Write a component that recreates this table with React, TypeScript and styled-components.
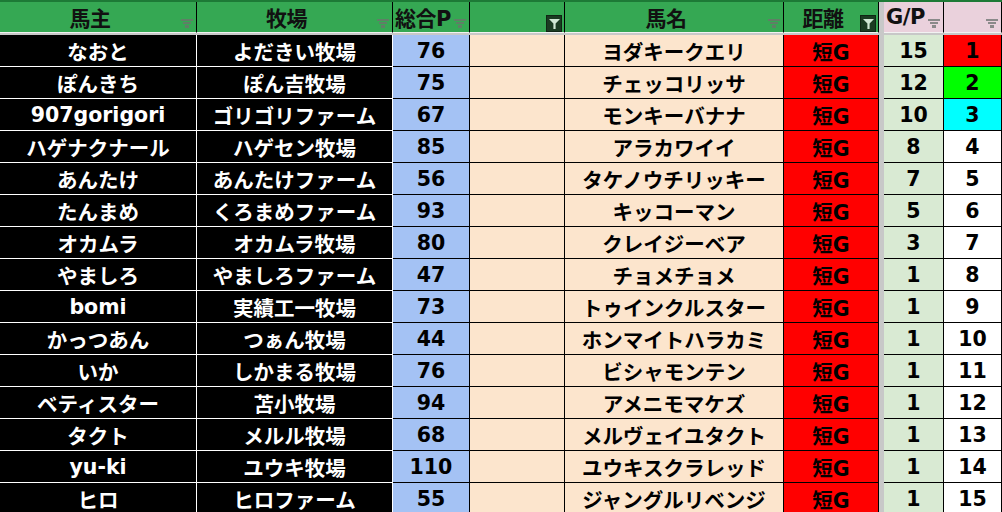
import React from 'react';
import styled, { createGlobalStyle } from 'styled-components';

const GlobalStyle = createGlobalStyle`
  html, body {
    margin: 0;
    padding: 0;
    background: #fff;
    overflow: hidden;
  }
  * {
    box-sizing: border-box;
  }
`;

const COLUMNS = '197px 196px 77px 95px 219px 95px 5px 60px 58px';

type Entry = {
  owner: string;
  farm: string;
  points: number;
  horse: string;
  gp: number;
  rank: number;
};

const entries: Entry[] = [
  { owner: 'なおと', farm: 'よだきい牧場', points: 76, horse: 'ヨダキークエリ', gp: 15, rank: 1 },
  { owner: 'ぽんきち', farm: 'ぽん吉牧場', points: 75, horse: 'チェッコリッサ', gp: 12, rank: 2 },
  { owner: '907gorigori', farm: 'ゴリゴリファーム', points: 67, horse: 'モンキーバナナ', gp: 10, rank: 3 },
  { owner: 'ハゲナクナール', farm: 'ハゲセン牧場', points: 85, horse: 'アラカワイイ', gp: 8, rank: 4 },
  { owner: 'あんたけ', farm: 'あんたけファーム', points: 56, horse: 'タケノウチリッキー', gp: 7, rank: 5 },
  { owner: 'たんまめ', farm: 'くろまめファーム', points: 93, horse: 'キッコーマン', gp: 5, rank: 6 },
  { owner: 'オカムラ', farm: 'オカムラ牧場', points: 80, horse: 'クレイジーベア', gp: 3, rank: 7 },
  { owner: 'やましろ', farm: 'やましろファーム', points: 47, horse: 'チョメチョメ', gp: 1, rank: 8 },
  { owner: 'bomi', farm: '実績工一牧場', points: 73, horse: 'トゥインクルスター', gp: 1, rank: 9 },
  { owner: 'かっつあん', farm: 'つぁん牧場', points: 44, horse: 'ホンマイトハラカミ', gp: 1, rank: 10 },
  { owner: 'いか', farm: 'しかまる牧場', points: 76, horse: 'ビシャモンテン', gp: 1, rank: 11 },
  { owner: 'ベティスター', farm: '苫小牧場', points: 94, horse: 'アメニモマケズ', gp: 1, rank: 12 },
  { owner: 'タクト', farm: 'メルル牧場', points: 68, horse: 'メルヴェイユタクト', gp: 1, rank: 13 },
  { owner: 'yu-ki', farm: 'ユウキ牧場', points: 110, horse: 'ユウキスクラレッド', gp: 1, rank: 14 },
  { owner: 'ヒロ', farm: 'ヒロファーム', points: 55, horse: 'ジャングルリベンジ', gp: 1, rank: 15 },
];

const rankColors: Record<number, string> = {
  1: '#ff0000',
  2: '#00ff00',
  3: '#00ffff',
};

const Sheet = styled.div`
  width: 1002px;
  height: 512px;
  overflow: hidden;
  font-family: 'DejaVu Sans', 'Noto Sans CJK JP', sans-serif;
  font-weight: bold;
  background: #fff;
`;

const HeaderRow = styled.div`
  display: grid;
  grid-template-columns: ${COLUMNS};
  height: 31px;
  border-top: 2px solid #1d7a36;
`;

const HeaderCell = styled.div<{ $pink?: boolean }>`
  position: relative;
  display: flex;
  align-items: center;
  justify-content: center;
  padding-right: 16px;
  background: ${(p) => (p.$pink ? '#ead1dc' : '#35a853')};
  border-right: 1px solid #000;
  border-bottom: 1px solid #f2f2f2;
  color: #111;
  font-size: 21px;
  white-space: nowrap;
  letter-spacing: -0.5px;
`;

const GapCell = styled.div`
  background: #c8c8c8;
`;

const FilterMark = styled.svg`
  position: absolute;
  right: 3px;
  bottom: 4px;
`;

const ActiveFilter = styled.div`
  position: absolute;
  right: 2px;
  bottom: 0;
  width: 16px;
  height: 17px;
  background: #1b3b22;
  border: 1px solid #0f2614;
  display: flex;
  align-items: center;
  justify-content: center;
`;

const Divider = styled.div`
  height: 4px;
  background: #c8c8c8;
`;

const Row = styled.div`
  display: grid;
  grid-template-columns: ${COLUMNS};
  height: 32px;
`;

const Cell = styled.div<{ $bg: string; $dark?: boolean }>`
  display: flex;
  align-items: center;
  justify-content: center;
  padding-top: 1px;
  background: ${(p) => p.$bg};
  color: ${(p) => (p.$dark ? '#fff' : '#000')};
  border-right: 1px solid ${(p) => (p.$dark ? '#fff' : '#000')};
  border-bottom: 1px solid ${(p) => (p.$dark ? '#fff' : '#000')};
  font-size: 20.5px;
  white-space: nowrap;
  overflow: hidden;
`;

const Filter: React.FC<{ pink?: boolean }> = ({ pink }) => (
  <FilterMark width="12" height="9" viewBox="0 0 12 9">
    <g fill={pink ? '#8a8a8a' : '#5f7f66'}>
      <rect x="0" y="0" width="12" height="2" />
      <rect x="2" y="3" width="8" height="2" />
      <rect x="4" y="6" width="4" height="3" />
    </g>
  </FilterMark>
);

const Filtered: React.FC = () => (
  <ActiveFilter>
    <svg width="11" height="11" viewBox="0 0 10 10">
      <polygon points="0,1 10,1 6,5 6,10 4,10 4,5" fill="#cfe6d3" />
    </svg>
  </ActiveFilter>
);

export default function App() {
  return (
    <>
      <GlobalStyle />
      <Sheet>
        <HeaderRow>
          <HeaderCell>馬主<Filter /></HeaderCell>
          <HeaderCell>牧場<Filter /></HeaderCell>
          <HeaderCell>総合P<Filter /></HeaderCell>
          <HeaderCell><Filtered /></HeaderCell>
          <HeaderCell>馬名<Filter /></HeaderCell>
          <HeaderCell>距離<Filtered /></HeaderCell>
          <GapCell />
          <HeaderCell $pink>G/P<Filter pink /></HeaderCell>
          <HeaderCell $pink><Filter pink /></HeaderCell>
        </HeaderRow>
        <Divider />
        {entries.map((e) => (
          <Row key={e.rank}>
            <Cell $bg="#000" $dark>{e.owner}</Cell>
            <Cell $bg="#000" $dark>{e.farm}</Cell>
            <Cell $bg="#a4c2f4">{e.points}</Cell>
            <Cell $bg="#fce5cd" />
            <Cell $bg="#fce5cd">{e.horse}</Cell>
            <Cell $bg="#ff0000">短G</Cell>
            <GapCell />
            <Cell $bg="#d9ead3">{e.gp}</Cell>
            <Cell $bg={rankColors[e.rank] ?? '#fff'}>{e.rank}</Cell>
          </Row>
        ))}
      </Sheet>
    </>
  );
}
